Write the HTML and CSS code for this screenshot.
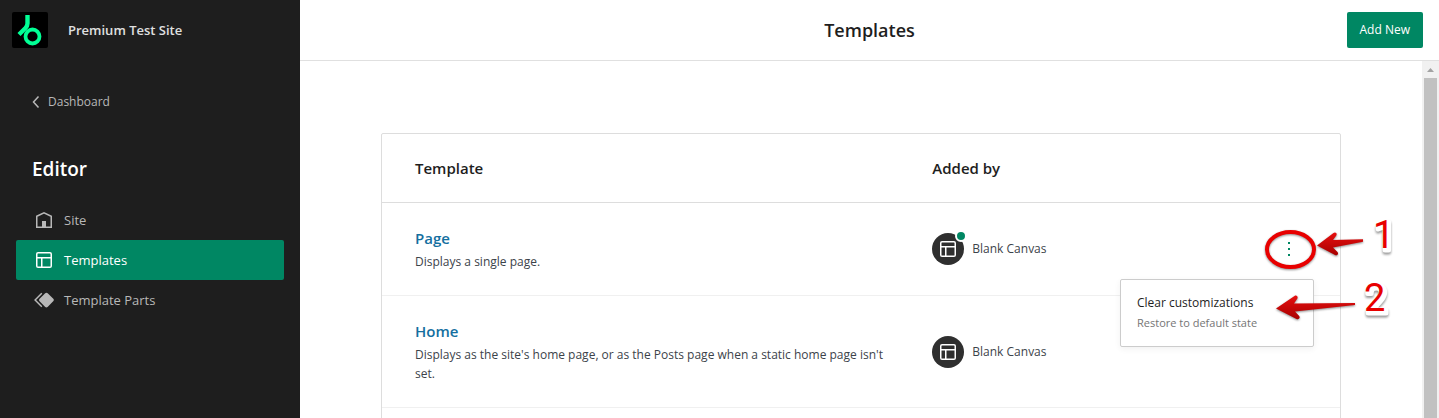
FILE: index.html
```html
<!DOCTYPE html>
<html lang="en">
<head>
  <meta charset="UTF-8">
  <title>Templates</title>
  <meta name="viewport" content="width=device-width, initial-scale=1">
  <link rel="stylesheet" href="styles.css">
</head>
<body>

  <div class="app">
    <nav class="sidebar">
      <div class="site">
        <a class="site-logo" href="#" aria-label="Home">
          <svg viewBox="0 0 36 36" width="36" height="36" fill="none" stroke="#01ff95">
            <circle cx="20.5" cy="24.5" r="7" stroke-width="3.8"/>
            <path d="M15.5 3v8.500c0 2-.6 3-2 4.500L7 22.500" stroke-width="4.4"/>
          </svg>
        </a>
        <span class="site-title">Premium Test Site</span>
      </div>

      <a class="back" href="#">
        <svg viewBox="0 0 8 12" width="8" height="12" fill="none" stroke="currentColor" stroke-width="1.5"><path d="M6.5 .5L1.5 6l5 5.5"/></svg>
        Dashboard
      </a>

      <h2 class="sidebar-heading">Editor</h2>

      <ul class="menu">
        <li><a class="menu-item" href="#">
          <svg viewBox="0 0 24 24" width="24" height="24"><path fill="none" stroke="currentColor" stroke-width="1.5" d="M4.75 8.3L12 4.9l7.25 3.4v10.95H4.75z"/><path fill="currentColor" d="M10 13h4v6h-4z"/></svg>
          Site
        </a></li>
        <li><a class="menu-item active" href="#" aria-current="page">
          <svg viewBox="0 0 24 24" width="24" height="24" fill="none" stroke="currentColor" stroke-width="1.5"><rect x="4.75" y="4.75" width="14.5" height="14.5" rx="1.3"/><path d="M5 9.75h14M9.75 9.75V19"/></svg>
          Templates
        </a></li>
        <li><a class="menu-item" href="#">
          <svg viewBox="0 0 24 24" width="24" height="24"><path fill="currentColor" d="M21.3 10.8l-5.6-5.6c-.7-.7-1.8-.7-2.5 0l-5.6 5.6c-.7.7-.7 1.8 0 2.5l5.6 5.6c.3.3.8.5 1.2.5s.9-.2 1.2-.5l5.6-5.6c.8-.7.8-1.9.1-2.5z"/><path fill="none" stroke="currentColor" stroke-width="1.5" d="M9.8 5.2L3.1 12l6.7 6.8"/></svg>
          Template Parts
        </a></li>
      </ul>
    </nav>

    <div class="main">
      <header class="topbar">
        <h1>Templates</h1>
        <button class="add-new" type="button">Add New</button>
      </header>

      <div class="body">
        <div class="content">
          <div class="card">
            <table class="list">
              <thead>
                <tr>
                  <th class="col-template" scope="col">Template</th>
                  <th class="col-author" scope="col">Added by</th>
                  <th class="col-actions" aria-label="Actions"></th>
                </tr>
              </thead>
              <tbody>
                <tr>
                  <td>
                    <a class="name" href="#">Page</a>
                    <p class="desc">Displays a single page.</p>
                  </td>
                  <td>
                    <div class="author">
                      <span class="avatar">
                        <svg viewBox="0 0 24 24" width="24" height="24" fill="none" stroke="currentColor" stroke-width="1.5"><rect x="4.75" y="4.75" width="14.5" height="14.5" rx="1.3"/><path d="M5 9.75h14M9.75 9.75V19"/></svg>
                        <span class="customized"></span>
                      </span>
                      Blank Canvas
                    </div>
                  </td>
                  <td>
                    <div class="dropdown">
                      <button class="more" type="button" aria-label="Actions" aria-expanded="true">
                        <svg viewBox="0 0 24 24" width="24" height="24" fill="currentColor"><path d="M11 5h2v2h-2zM11 11h2v2h-2zM11 17h2v2h-2z"/></svg>
                      </button>
                      <div class="popover">
                        <button class="popover-item" type="button">
                          <span class="popover-label">Clear customizations</span>
                          <span class="popover-info">Restore to default state</span>
                        </button>
                      </div>
                      <svg class="callouts" viewBox="0 0 150 110" width="150" height="110">
                        <defs>
                          <linearGradient id="red" x1="0" y1="0" x2="0" y2="1">
                            <stop offset="0" stop-color="#e61010"/>
                            <stop offset="1" stop-color="#a80000"/>
                          </linearGradient>
                        </defs>
                        <ellipse class="shadow" cx="35.5" cy="34.5" rx="23.5" ry="17.5" fill="none" stroke="#e80000" stroke-width="4"/>
                        <path class="shadow" fill="url(#red)" d="M62 30.5L78.5 18c2-1.5 4 .5 2.800 2.500L78 25l30-.8v2.500L78 32.500l4.500 4.500c1.500 2-.5 4-2.500 3z"/>
                        <path class="shadow" fill="url(#red)" d="M21 93.5L39.5 81c2-1.3 4 .8 2.700 2.800L39 88.500l61-.5v2L40 96.500l4.200 4.500c1.300 2-.5 4-2.700 3z"/>
                        <g class="number">
                          <text class="halo" x="120" y="35">1</text>
                          <text class="halo" x="111" y="98">2</text>
                          <text x="118" y="33">1</text>
                          <text x="109" y="96">2</text>
                        </g>
                      </svg>
                    </div>
                  </td>
                </tr>
                <tr>
                  <td>
                    <a class="name" href="#">Home</a>
                    <p class="desc">Displays as the site's home page, or as the Posts page when a static home page isn't set.</p>
                  </td>
                  <td>
                    <div class="author">
                      <span class="avatar">
                        <svg viewBox="0 0 24 24" width="24" height="24" fill="none" stroke="currentColor" stroke-width="1.5"><rect x="4.75" y="4.75" width="14.5" height="14.5" rx="1.3"/><path d="M5 9.75h14M9.75 9.75V19"/></svg>
                      </span>
                      Blank Canvas
                    </div>
                  </td>
                  <td></td>
                </tr>
              </tbody>
            </table>
          </div>
        </div>

        <div class="scrollbar" aria-hidden="true">
          <svg viewBox="0 0 17 17" width="17" height="17"><path fill="#a3a3a3" d="M5 11l3.5-4 3.5 4z"/></svg>
          <div class="thumb"></div>
        </div>
      </div>
    </div>
  </div>

</body>
</html>
```
FILE: styles.css
```css
* {
  box-sizing: border-box;
}

body {
  margin: 0;
  font-family: "Open Sans", "Noto Sans", sans-serif;
  font-size: 12px;
  line-height: 20px;
  color: #1e1e1e;
  background: #fff;
}

a {
  text-decoration: none;
}

button {
  font: inherit;
  cursor: pointer;
}

svg {
  display: block;
  flex: none;
}

.app {
  display: flex;
  height: 100vh;
  overflow: hidden;
}

/* Sidebar */
.sidebar {
  flex: 0 0 300px;
  background: #1e1e1e;
  color: #b8b8b8;
}

.site {
  display: flex;
  align-items: center;
  gap: 20px;
  height: 60px;
  padding: 0 12px;
}

.site-logo {
  background: #000;
  border-radius: 2px;
}

.site-title {
  font-size: 13px;
  font-weight: 600;
  color: #e0e0e0;
}

.back {
  display: flex;
  align-items: center;
  gap: 8px;
  margin-top: 32px;
  padding: 0 32px;
  color: #b8b8b8;
}

.sidebar-heading {
  margin: 42px 0 16px;
  padding: 0 32px;
  font-size: 19px;
  line-height: 30px;
  font-weight: 600;
  color: #fff;
}

.menu {
  list-style: none;
  margin: 0;
  padding: 0 16px;
}

.menu-item {
  display: flex;
  align-items: center;
  gap: 8px;
  height: 40px;
  padding: 0 16px;
  border-radius: 2px;
  font-size: 13px;
  color: #b8b8b8;
}

.menu-item.active {
  background: #008763;
  color: #fff;
}

/* Main area */
.main {
  flex: 1;
  min-width: 0;
  display: flex;
  flex-direction: column;
}

.topbar {
  display: grid;
  grid-template-columns: 1fr auto 1fr;
  align-items: center;
  padding: 12px 16px;
  border-bottom: 1px solid #e0e0e0;
}

.topbar h1 {
  grid-column: 2;
  margin: 0;
  font-size: 18px;
  font-weight: 600;
}

.add-new {
  justify-self: end;
  height: 36px;
  padding: 0 13px;
  border: 0;
  border-radius: 2px;
  background: #008763;
  color: #fff;
}

.body {
  flex: 1;
  min-height: 0;
  display: flex;
}

.content {
  flex: 1;
  padding: 72px 32px;
}

.card {
  max-width: 960px;
  min-height: 400px;
  margin: 0 auto;
  border: 1px solid #ddd;
  border-radius: 2px;
}

.list {
  width: 100%;
  table-layout: fixed;
  border-spacing: 0;
}

.list th {
  height: 69px;
  padding: 0 0 0 33px;
  text-align: left;
  font-size: 15px;
  font-weight: 600;
  border-bottom: 1px solid #ddd;
}

.list td {
  padding: 24px 0 24px 33px;
  border-bottom: 1px solid #f0f0f0;
}

.list .col-template {
  width: 54%;
}

.list .col-actions {
  width: 102px;
}

.name {
  display: block;
  font-size: 15px;
  line-height: 22px;
  font-weight: 600;
  color: #146fa0;
}

.desc {
  margin: 3px 0 0;
  line-height: 19px;
  color: #3c434a;
}

.author {
  display: flex;
  align-items: center;
  gap: 8px;
  color: #3c434a;
}

.avatar {
  position: relative;
  padding: 4px;
  border-radius: 50%;
  background: #2f2f2f;
  color: #fff;
}

.customized {
  position: absolute;
  top: -3px;
  right: -3px;
  width: 12px;
  height: 12px;
  border: 2px solid #fff;
  border-radius: 50%;
  background: #008763;
}

.dropdown {
  position: relative;
  width: 36px;
}

.more {
  display: flex;
  align-items: center;
  justify-content: center;
  width: 36px;
  height: 36px;
  padding: 0;
  border: 0;
  background: none;
  color: #008763;
}

.popover {
  position: absolute;
  top: 48px;
  right: -7px;
  width: 194px;
  padding: 8px;
  border: 1px solid #ccc;
  border-radius: 2px;
  background: #fff;
  box-shadow: 0 2px 6px rgba(0, 0, 0, 0.06);
}

.popover-item {
  display: flex;
  flex-direction: column;
  width: 100%;
  padding: 5px 8px;
  border: 0;
  background: none;
  text-align: left;
  white-space: nowrap;
}

.popover-label {
  color: #1e1e1e;
}

.popover-info {
  font-size: 11px;
  color: #757575;
}

/* Numbered arrows over the menu */
.callouts {
  position: absolute;
  top: -16px;
  left: -16px;
  overflow: visible;
  pointer-events: none;
}

.shadow {
  filter: drop-shadow(0 1px 1px rgba(0, 0, 0, 0.45));
}

.number {
  font-family: Roboto, sans-serif;
  font-size: 38px;
  fill: #e80000;
}

.halo {
  fill: #fff;
  stroke: #fff;
  stroke-width: 5px;
  stroke-linejoin: round;
  filter: drop-shadow(0 2px 1px rgba(0, 0, 0, 0.4));
}

.scrollbar {
  flex: 0 0 17px;
  display: flex;
  flex-direction: column;
  background: #f1f1f1;
}

.thumb {
  flex: 1;
  margin: 0 2px;
  background: #c1c1c1;
}
```
